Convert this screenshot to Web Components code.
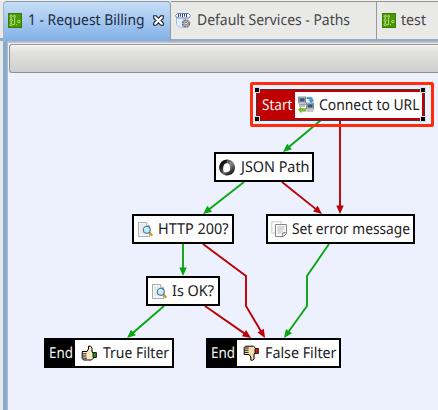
<!DOCTYPE html>
<html lang="en"><head><meta charset="utf-8"><title>Request Billing</title>
<style>html,body{margin:0;width:438px;height:410px;overflow:hidden}</style></head>
<body><flow-editor></flow-editor>
<script>
const define=(n,html,after)=>customElements.define(n,class extends HTMLElement{
  connectedCallback(){ if(this.shadowRoot)return;
    const r=this.attachShadow({mode:'open'});
    r.innerHTML=typeof html==='function'?html(this):html; if(after)after(this); }
});

// One line of text drawn to a given width.
define('fit-text',e=>{const w=+e.getAttribute('w');
 return `<style>:host{display:block;flex:none;width:${w}px;height:22px}svg{display:block;overflow:visible}
 text{font-family:"Noto Sans",sans-serif;font-size:15px;fill:currentColor;text-rendering:geometricPrecision}</style>
 <svg width="${w}" height="22"><text x="0" y="16" textLength="${w}" lengthAdjust="spacingAndGlyphs">${e.getAttribute('text')}</text></svg>`});

const icons={
 flow:`<rect x="1" y="1" width="14" height="15" fill="#377d00"/><rect x="2" y="2" width="12" height="13" fill="#4b9900"/>
  <g fill="none" stroke="#c9e8a4" stroke-width=".8"><circle cx="4.2" cy="4.2" r="1.1"/><circle cx="4.2" cy="8.4" r="1.1"/><circle cx="4.2" cy="12.6" r="1.1"/><circle cx="7.6" cy="4.2" r=".9"/><circle cx="11.8" cy="9.5" r="1.2"/><path d="M7.6 5.2V12.6H5.4M4.2 5.3v2M4.2 9.5v2M9 12.6h1"/></g>`,
 service:`<path d="M2.5 1.5h11l2 2-1.5 2.5H2L.5 3.5z" fill="#f8fbff" stroke="#5775ae" stroke-width=".9"/><path d="M3.5 2v3.2M5.5 2v2.5M7.5 2v3.2M9.5 2v2.5M11.5 2v3.2" stroke="#25477f"/>
  <path d="M1.5 6.5v6q1.5 3 7 3v-9z" fill="#e4efff" stroke="#a9bfe2"/><circle cx="11" cy="11.6" r="3.4" fill="#bbb" stroke="#777" stroke-width="1.7" stroke-dasharray="2 .7"/><circle cx="11" cy="11.6" r="1.3" fill="#f4f4f4" stroke="#666" stroke-width=".7"/>`,
 connect:`<g stroke="#66747d" stroke-width=".8"><rect x=".6" y="1" width="7" height="6" fill="#dfe5e8"/><rect x="1.8" y="2.2" width="4.6" height="3.2" fill="#2b5688"/><path d="M1 8.7h7M1 10h6"/>
  <rect x="8.6" y="7" width="7" height="6" fill="#dfe5e8"/><rect x="9.8" y="8.2" width="4.6" height="3.2" fill="#2b5688"/><path d="M8.6 15h7"/></g>
  <path d="M8.8 1.2H13q1.5 0 1.5 2v1H16L13.3 6.7 10.7 4.2h1.5V3H8.8z" fill="#3aa0dc" stroke="#2175ae" stroke-width=".4"/>
  <path d="M.3 13.6L3 11.2v1.4h4.7v2.7H3v1.5z" fill="#80bd28" stroke="#568c13" stroke-width=".4"/>`,
 json:`<defs><linearGradient id="a" x2=".6" y2="1"><stop stop-color="#666"/><stop offset=".35" stop-color="#0c0c0c"/><stop offset="1" stop-color="#777"/></linearGradient><linearGradient id="b" x2=".6" y2="1"><stop stop-color="#222"/><stop offset=".5" stop-color="#8a8a8a"/><stop offset="1" stop-color="#111"/></linearGradient></defs>
  <path fill="url(#a)" d="M8.2.6C3.5.6.2 4.2.2 8.6c0 4.3 3.3 7.9 7.8 8C4.8 14.4 3.4 11.2 4.4 8 5.1 5.6 6.5 4.3 8.3 4.3z"/>
  <path fill="url(#b)" d="M8 .6c4.6 0 8 3.6 8 8s-3.4 8-7.9 8c-2.5-.4-4.1-2-4.6-4.2 2.4 1.7 5.3 1 6.6-.9 1.5-2.3.6-5.5-1.8-7.2z"/>
  <ellipse cx="8" cy="8.6" rx="3.2" ry="4.1" fill="white" transform="rotate(-12 8 8.6)"/>`,
 search:`<path d="M1.5 1.5h8l3 3v11h-11z" fill="#f4f6f6" stroke="#a6afb2"/><path d="M9.5 1.5v3h3" fill="#fff" stroke="#a6afb2" stroke-width=".8"/><path d="M3 4h5M3 6h3M3 8h2M3 10h2M3 12h4" stroke="#d4dada" stroke-width=".8"/>
  <circle cx="9.8" cy="8.8" r="3.5" fill="#c5eaff" stroke="#4e7e9a" stroke-width="1.2"/><path d="M8 8.2q.4-1.8 2-1.8" stroke="white" fill="none"/><path d="M12.3 11.4l1 1" stroke="#567" stroke-width="1.5"/><path d="M13.5 12.8l1 1" stroke="#dd9529" stroke-width="2.6" stroke-linecap="round"/>`,
 pages:`<path d="M.8.8h9.4v11.4H.8z" fill="#fff" stroke="#c4c4c4" stroke-width=".9"/><path d="M4.5 3.5h11v9l-3 3h-8z" fill="#fafafa" stroke="#888"/><path d="M6.5 6h7M6.5 8h7M6.5 10h5M6.5 12h4" stroke="#aaa" stroke-width=".8"/><path d="M15.3 11.8h-3.5v3.5" fill="#fff" stroke="#777"/>`,
 up:`<path d="M1.2 6.5H6L7.5 4V1.2h2.3L11 3v4l1.5 1v5L10.5 15h-8L1.2 13.5z" fill="#ffe8c4" stroke="#000" stroke-linejoin="round"/><path d="M1.5 8.8h4M1.5 11h4M1.8 13.2h4" stroke="#000" stroke-width=".9" fill="none"/><path d="M12 7.5h3.4v5H12z" fill="#248b25" stroke="#111" stroke-width=".9"/>`,
 down:`<path d="M1.2 2.5L2.5 1.2h8L12.5 3v5L11 9v5l-1.2 1.2H7.8V12L6 9.5H1.2z" fill="#f5dda9" stroke="#000" stroke-linejoin="round"/><path d="M1.8 3h4M1.5 5.2h4M1.5 7.4h4" stroke="#000" stroke-width=".9"/><path d="M12 3.5h3.4v5H12z" fill="#d7131c" stroke="#111" stroke-width=".9"/>`
};
define('app-icon',e=>`<style>:host{display:block;flex:none;width:16px;height:17px}svg{display:block}</style><svg width="16" height="17" viewBox="0 0 16 17">${icons[e.getAttribute('name')]}</svg>`);

define('tab-item',`<style>:host{display:flex;box-sizing:border-box;height:38px;padding:0 0 0 6px;border-right:1px solid #96989a;border-top:1px solid #92948f;color:#454545;background:#e9e9e8}
 :host([active]){height:41px;color:#1d2b42;background:linear-gradient(#c7def6,#a3c7f0 50%,#80afe6);border-left:1px solid #a6b4c2;border-top-color:#8a9aaa;border-radius:4px 4px 0 0;padding-left:3px}
 ::slotted(app-icon){margin-top:10px}::slotted(fit-text){margin-top:7px}</style><slot></slot>`);
define('close-mark',`<style>:host{display:block;margin:13px 0 0 8px;width:11px;height:11px}svg{display:block}</style><svg width="11" height="11"><path d="M.7.8h2.5l2.3 2.5L7.8.8h2.5v2.4L8 5.5l2.3 2.4v2.4H7.8L5.5 7.8l-2.3 2.5H.7V7.9L3 5.5.7 3.2z" fill="#fff" stroke="#17202b" stroke-width="1.1"/></svg>`);

define('tab-strip',`<style>:host{display:flex;box-sizing:border-box;height:41px;padding:1px 0 0 3px;background:linear-gradient(#f0f0f0 1px,#e9e9e8 1px,#e9e9e8 38px,#8eacc8 38px)}
 ::slotted(*){flex:none}</style><slot></slot>`);

// Step box: optional dark start/end cap, then icon and caption.
define('flow-node',e=>{const a=e.getAttribute.bind(e),cap=a('cap'),sel=e.hasAttribute('selected');
 return `<style>:host{position:absolute;left:${a('x')}px;top:${a('y')}px;box-sizing:border-box;width:${a('w')}px;height:${sel?32:30}px;border:2px solid #000;background:#fff;display:flex;color:#202020}
 :host([selected]){border:3px solid #c00000;outline:1px solid #493039;outline-offset:-1px}
 .cap{flex:none;box-sizing:border-box;width:${a('capw')||0}px;background:${sel?'#c00000':'#000'};color:#f4f4f4;padding:${sel?1.7:2}px 0 0 ${sel?2.5:3}px}
 .body{display:flex;padding-left:${a('pad')||3}px}.body app-icon{margin-top:${sel?4:4.5}px}.body fit-text{margin:${sel?1.7:2}px 0 0 ${a('gap')}px}
 i{position:absolute;width:4px;height:4px;background:#000;border:.5px solid #ddd;box-sizing:content-box}
 </style>${cap?`<div class="cap"><fit-text text="${cap}" w="${a('captw')}"></fit-text></div>`:''}
 <div class="body"><app-icon name="${a('icon')}"></app-icon><fit-text text="${a('text')}" w="${a('tw')}"></fit-text></div>
 ${sel?'<i style="left:-5px;top:-5px"></i><i style="right:-4px;top:-5px"></i><i style="left:-5px;bottom:-4px"></i><i style="right:-4px;bottom:-4px"></i>':''}`});

define('flow-links',()=>{
 const G='#08a712',R='#bc0008';
 const links=[[G,[[321,120],[283,152]]],[R,[[340,120],[340,214]]],[G,[[244,182],[203,214]]],[R,[[282,182],[322,214]]],
 [G,[[183,244],[183,276]]],[R,[[203,244],[246,276],[246,306],[265,338]]],[G,[[329,244],[307,276],[307,306],[284,338]]],
 [G,[[164,306],[127,338]]],[R,[[205,306],[251,338]]]];
 return `<style>:host{position:absolute;inset:0}svg{display:block}</style><svg width="438" height="410">`+links.map(([c,p])=>{
  const [x,y]=p.at(-1),[u,v]=p.at(-2),t=Math.atan2(y-v,x-u)*180/Math.PI,l=Math.hypot(x-u,y-v);
  const q=p.slice(0,-1).concat([[x-(x-u)/l*5,y-(y-v)/l*5]]);
  return `<polyline points="${q.join(' ')}" fill="none" stroke="${c}" stroke-width="1.9"/><path d="M0 0L-8.5-3.7V3.7z" fill="${c}" transform="translate(${x} ${y}) rotate(${t})"/>`}).join('')+'</svg>'});

define('tool-bar',`<style>:host{display:block;flex:none;box-sizing:border-box;height:29px;border:1px solid #92938e;border-radius:3px 0 0 3px;border-right:0;background:linear-gradient(#f0f0ef,#e0e0df 30%,#cfcfce);box-shadow:inset 0 1px #fafafa}</style>`);
define('highlight-box',`<style>:host{position:absolute;left:250px;top:82px;width:184px;height:45px;box-sizing:border-box;border:3px solid #ff2b0c;border-radius:2px}</style>`);

define('flow-editor',`<style>:host{display:block;width:438px;height:410px;position:relative;overflow:hidden;background:#e9e9e8}
 .frame{box-sizing:border-box;height:369px;margin-left:3px;border-left:4px solid #85aad0;display:flex}
 .inner{flex:1;border-left:1px solid #b4b8bb;padding:3px 0 0 1px;background:linear-gradient(#b9bdc0 2px,#edf1fd 2px)}</style>
 <tab-strip>
 <tab-item active style="width:168px"><app-icon name="flow"></app-icon><fit-text text="1 - Request Billing" w="116.5" style="margin-left:5px"></fit-text><close-mark></close-mark></tab-item>
 <tab-item style="width:206px;padding-left:4px"><app-icon name="service"></app-icon><fit-text text="Default Services - Paths" w="153" style="margin-left:6px"></fit-text></tab-item>
 <tab-item style="width:61px;border-right:0;padding-left:4px"><app-icon name="flow"></app-icon><fit-text text="test" w="25" style="margin-left:4px"></fit-text></tab-item>
 </tab-strip>
 <div class="frame"><div class="inner"><tool-bar></tool-bar></div></div>
 <flow-links></flow-links>
 <flow-node selected x="256" y="89" w="169" cap="Start" capw="36" captw="30.5" icon="connect" text="Connect to URL" tw="100.5" pad="3" gap="4.5"></flow-node>
 <flow-node x="214" y="152" w="100" icon="json" text="JSON Path" tw="68.5" pad="3" gap="6"></flow-node>
 <flow-node x="132" y="214" w="102" icon="search" text="HTTP 200?" tw="70.5" gap="4.5"></flow-node>
 <flow-node x="266" y="214" w="149" icon="pages" text="Set error message" tw="118" gap="5"></flow-node>
 <flow-node x="146" y="276" w="74" icon="search" text="Is OK?" tw="42" gap="5"></flow-node>
 <flow-node x="44" y="338" w="130" cap="End" capw="29" captw="24" icon="up" text="True Filter" tw="66" pad="5.5" gap="6.5"></flow-node>
 <flow-node x="206" y="338" w="135" cap="End" capw="29" captw="24" icon="down" text="False Filter" tw="71.5" pad="5.5" gap="6.5"></flow-node>
 <highlight-box></highlight-box>`);
</script></body></html>
